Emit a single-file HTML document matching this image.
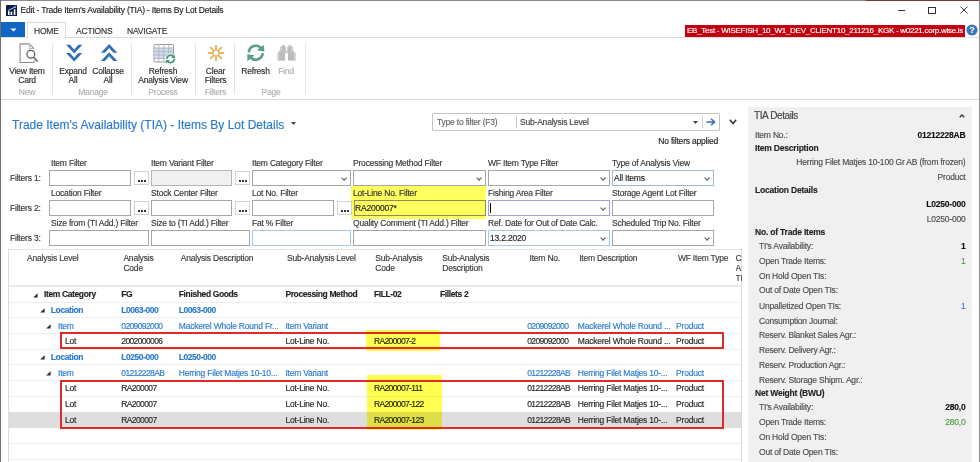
<!DOCTYPE html>
<html><head><meta charset="utf-8">
<style>
*{margin:0;padding:0;box-sizing:border-box}
html,body{width:980px;height:462px;overflow:hidden;background:#fff}
body{position:relative;font-family:"Liberation Sans",sans-serif;font-size:8.5px;color:#333}
.a{position:absolute;white-space:nowrap}
div{-webkit-text-stroke:0.15px currentColor}
.gb,.gbb,.pb,.prb{-webkit-text-stroke:0.12px currentColor}
.ln{position:absolute;background:#d9d9d9}
.rb{position:absolute;text-align:center;font-size:8.5px;letter-spacing:-0.2px;line-height:9px;color:#2a2a2a;white-space:nowrap}
.grp{position:absolute;text-align:center;font-size:8.5px;letter-spacing:-0.2px;line-height:9px;color:#b0b0b0;white-space:nowrap}
.sep{position:absolute;top:43px;width:1px;height:51px;background:#e3e3e3}
.lbl{position:absolute;font-size:8.5px;letter-spacing:-0.2px;line-height:10px;color:#363636;white-space:nowrap}
.inp{position:absolute;height:16px;border:1px solid #a6a6a6;background:#fff}
.dots{position:absolute;width:15px;height:14px;border:1px solid #d2d2d2;background:#fff}
.dots::after{content:"";position:absolute;left:3px;top:8px;width:2px;height:2px;background:#333;box-shadow:3px 0 0 #333,6px 0 0 #333}
.chev{position:absolute;right:3.5px;top:4.5px;width:4.2px;height:4.2px;border-right:1px solid #555;border-bottom:1px solid #555;transform:rotate(45deg)}
.gh{position:absolute;top:253.3px;font-size:8.5px;letter-spacing:-0.2px;line-height:10px;color:#3a3a3a;white-space:nowrap}
.gc{position:absolute;font-size:8.5px;letter-spacing:-0.2px;line-height:15.7px;white-space:nowrap}
.gb{font-weight:bold;color:#222}
.gbb{font-weight:bold;color:#2a7bcf}
.gbl{color:#2a7bcf}
.gn{color:#262626}
.yl{background:#ffff52;mix-blend-mode:multiply}
.pl{font-size:8.5px;letter-spacing:-0.2px;line-height:10px;color:#4d4d4d}
.pb{font-size:8.5px;letter-spacing:-0.2px;line-height:10px;color:#222;font-weight:bold}
.pr{font-size:8.5px;letter-spacing:-0.2px;line-height:10px;color:#4d4d4d}
.prb{font-size:8.5px;letter-spacing:-0.2px;line-height:10px;color:#111;font-weight:bold}
.prg{font-size:8.5px;letter-spacing:-0.2px;line-height:10px;color:#4a9e3a}
.prbl{font-size:8.5px;letter-spacing:-0.2px;line-height:10px;color:#2a7bcf}
</style></head><body>
<!-- window borders -->
<div class="a" style="left:0;top:0;width:866px;height:1px;background:#8a8a8a"></div>
<div class="a" style="left:866px;top:0;width:113px;height:1px;background:#7b3636"></div>
<div class="a" style="left:0;top:0;width:1px;height:462px;background:#707070"></div>
<div class="a" style="left:979px;top:0;width:1px;height:462px;background:#8a8a8a"></div>

<!-- title bar -->
<svg class="a" style="left:6px;top:5px" width="11" height="11" viewBox="0 0 11 11"><rect width="11" height="11" rx="0.5" fill="#0b1f4f"/><path d="M2 6.2H3.6V10H2ZM4.6 6.8H6.3V10H4.6ZM7.8 4.2H9.4V10H7.8Z" fill="#fff"/><path d="M2 5.6L6 3.6L8.9 2" stroke="#dfe6f2" stroke-width="0.9" fill="none"/><circle cx="9.1" cy="2" r="0.8" fill="#fff"/></svg>
<div class="a" style="left:20.6px;top:4px;font-size:8.5px;letter-spacing:-0.2px;color:#222;line-height:12px">Edit - Trade Item's Availability (TIA) - Items By Lot Details</div>
<!-- window controls -->
<div class="a" style="left:898px;top:10px;width:7px;height:1px;background:#333"></div>
<div class="a" style="left:928px;top:7px;width:8px;height:7px;border:1px solid #333"></div>
<svg class="a" style="left:960px;top:6px" width="8" height="8" viewBox="0 0 8 8"><path d="M0.5 0.5L7.5 7.5M7.5 0.5L0.5 7.5" stroke="#333" stroke-width="1"/></svg>

<!-- tabs -->
<div class="a" style="left:1px;top:22px;width:23.5px;height:15.8px;background:#1066c4"></div>
<svg class="a" style="left:10px;top:28px" width="7" height="4" viewBox="0 0 7 4"><path d="M0.5 0.5H6.5L3.5 3.5Z" fill="#fff"/></svg>
<div class="a" style="left:27px;top:22px;width:38.5px;height:16px;border:1px solid #dadada;border-bottom:none;background:#fff;z-index:2"></div>
<div class="a" style="left:34px;top:26px;font-size:8.5px;letter-spacing:-0.2px;line-height:10px;color:#333;z-index:3">HOME</div>
<div class="a" style="left:76px;top:26px;font-size:8.5px;letter-spacing:-0.2px;line-height:10px;color:#333">ACTIONS</div>
<div class="a" style="left:127px;top:26px;font-size:8.5px;letter-spacing:-0.2px;line-height:10px;color:#333">NAVIGATE</div>
<div class="a" style="left:684.5px;top:25px;width:280px;height:12px;background:#c4000f;color:#fff;font-size:8px;letter-spacing:-0.27px;line-height:12px;padding-left:2.5px;overflow:hidden">EB_Test - WISEFISH_10_W1_DEV_CLIENT10_211216_KGK - w0221.corp.wise.is</div>
<svg class="a" style="left:966px;top:24px" width="12" height="12" viewBox="0 0 12 12"><circle cx="6" cy="6" r="5.6" fill="#3c78b8"/><text x="6" y="9.2" font-family="Liberation Sans" font-weight="bold" font-size="9" fill="#fff" text-anchor="middle">?</text></svg>
<div class="ln" style="left:1px;top:37px;width:978px;height:1px;background:#dcdcdc;z-index:1"></div>

<!-- ribbon -->
<svg class="a" style="left:19px;top:43px" width="20" height="20" viewBox="0 0 20 20">
<path d="M14.9 17.3V19.5H1.1V0.9H10.1L14.9 5.7" fill="none" stroke="#8c8c8c" stroke-width="1.1"/>
<path d="M10.3 1.2V5.5H14.6" fill="none" stroke="#b8b8b8" stroke-width="1"/>
<circle cx="11.8" cy="11.3" r="3.9" fill="none" stroke="#5a5a5a" stroke-width="1.2"/>
<path d="M14.6 14.3L18.6 18.4" stroke="#5a5a5a" stroke-width="1.5"/>
</svg>
<div class="rb" style="left:6px;top:67px;width:42px">View Item<br>Card</div>
<div class="grp" style="left:6px;top:88px;width:42px">New</div>
<div class="sep" style="left:52px"></div>
<svg class="a" style="left:65px;top:44px" width="18" height="18" viewBox="0 0 18 18">
<path d="M1 0.8H5L9.2 5.6L13.4 0.8H17.4L9.2 9.4Z M1 9H5L9.2 13.8L13.4 9H17.4L9.2 17.6Z" fill="#3271b8"/>
</svg>
<svg class="a" style="left:100px;top:44px" width="18" height="18" viewBox="0 0 18 18">
<path d="M0.9 8.7L9.2 0.1L17.4 8.7H13.4L9.2 4.1L4.9 8.7Z M0.9 16.9L9.2 8.3L17.4 16.9H13.4L9.2 12.3L4.9 16.9Z" fill="#3271b8"/>
</svg>
<div class="rb" style="left:55px;top:67px;width:36px">Expand<br>All</div>
<div class="rb" style="left:90px;top:67px;width:36px">Collapse<br>All</div>
<div class="grp" style="left:60px;top:88px;width:66px">Manage</div>
<div class="sep" style="left:131px"></div>
<svg class="a" style="left:153px;top:44px" width="23" height="20" viewBox="0 0 23 20">
<rect x="1" y="0.5" width="19.5" height="17.5" rx="0.8" fill="#fff" stroke="#9a9a9a" stroke-width="1"/>
<rect x="1.5" y="4" width="18.5" height="10.5" fill="#c9dcf3"/>
<path d="M5.9 0.5V18M10.8 0.5V18M15.7 0.5V18M1 4H20.5M1 7.5H20.5M1 11H20.5M1 14.5H20.5" stroke="#b4b4b4" stroke-width="0.9"/>
<circle cx="17.3" cy="15" r="5.4" fill="#fff"/>
<g transform="translate(12.2,10.2) scale(0.54)"><path d="M2.9 8.4A6.9 6.9 0 0 1 15.45 4.74" fill="none" stroke="#3f9a70" stroke-width="3.2"/><path d="M17.6 0.8L18.5 7.5L10.9 6.4Z" fill="#3f9a70"/><path d="M16.7 9.2A6.9 6.9 0 0 1 4.15 12.66" fill="none" stroke="#3f9a70" stroke-width="3.2"/><path d="M1.3 10.3V17.3L8.6 11.2Z" fill="#3f9a70"/></g>
</svg>
<div class="rb" style="left:133px;top:67px;width:60px">Refresh<br>Analysis View</div>
<div class="grp" style="left:133px;top:88px;width:60px">Process</div>
<div class="sep" style="left:195px"></div>
<svg class="a" style="left:206.7px;top:44px" width="18" height="18" viewBox="0 0 18 18">
<g stroke="#e8b660" stroke-width="1.9" stroke-linecap="round">
<path d="M9 1.6V16.4M1.6 9H16.4M3.6 3.6L14.4 14.4M14.4 3.6L3.6 14.4"/>
</g>
<circle cx="9" cy="9" r="3.6" fill="#e8b660"/>
<circle cx="9" cy="9" r="2.3" fill="#fff"/>
</svg>
<div class="rb" style="left:197px;top:67px;width:37px">Clear<br>Filters</div>
<div class="grp" style="left:197px;top:88px;width:37px">Filters</div>
<div class="sep" style="left:234px"></div>
<svg class="a" style="left:246px;top:44px" width="19" height="18" viewBox="0 0 19 18"><path d="M2.9 8.4A6.9 6.9 0 0 1 15.45 4.74" fill="none" stroke="#5b9e86" stroke-width="2.6"/><path d="M17.6 0.8L18.5 7.5L10.9 6.4Z" fill="#5b9e86"/><path d="M16.7 9.2A6.9 6.9 0 0 1 4.15 12.66" fill="none" stroke="#5b9e86" stroke-width="2.6"/><path d="M1.3 10.3V17.3L8.6 11.2Z" fill="#5b9e86"/></svg>
<svg class="a" style="left:277px;top:45px" width="19" height="16" viewBox="0 0 19 16">
<g fill="#bcbcbc">
<rect x="0.5" y="7.7" width="7.6" height="7.9"/><rect x="3.1" y="1.8" width="5.7" height="6"/><rect x="4.8" y="0.2" width="2.8" height="1.8"/><rect x="2.1" y="5.5" width="1.2" height="2.4"/>
<rect x="8.6" y="6.5" width="1.8" height="1.6"/>
<rect x="11" y="7.7" width="7.6" height="7.9"/><rect x="10.2" y="1.8" width="5.7" height="6"/><rect x="11.5" y="0.2" width="2.8" height="1.8"/><rect x="15.7" y="5.5" width="1.2" height="2.4"/>
</g>
<g fill="#dadada"><rect x="0.5" y="8.5" width="1.3" height="6.5"/><rect x="17.2" y="8.5" width="1.3" height="6.5"/><rect x="14.2" y="2.5" width="1.2" height="3.5"/><rect x="3.6" y="2.5" width="1.2" height="3.5"/></g>
</svg>
<div class="rb" style="left:237px;top:67px;width:37px">Refresh</div>
<div class="rb" style="left:270px;top:67px;width:32px;color:#b0b0b0">Find</div>
<div class="grp" style="left:237px;top:88px;width:68px">Page</div>
<div class="sep" style="left:305px"></div>
<div class="ln" style="left:1px;top:99px;width:978px;height:1px;background:#dcdcdc"></div>


<!-- page title -->
<div class="a" style="left:12px;top:117.5px;font-size:12px;line-height:15px;color:#2a7bcf">Trade Item's Availability (TIA) - Items By Lot Details</div>
<svg class="a" style="left:291px;top:122px" width="5" height="3" viewBox="0 0 5 3"><path d="M0 0H5L2.5 3Z" fill="#444"/></svg>

<!-- search box -->
<div class="a" style="left:432px;top:113px;width:288px;height:17.5px;border:1px solid #c4c4c4;border-radius:1px;background:#fff"></div>
<div class="a" style="left:437px;top:117px;font-size:8.5px;letter-spacing:-0.2px;line-height:10px;color:#666">Type to filter (F3)</div>
<div class="a" style="left:516px;top:115.5px;width:1px;height:12.5px;background:#c8c8c8"></div>
<div class="a" style="left:520px;top:117px;font-size:8.5px;letter-spacing:-0.2px;line-height:10px;color:#444">Sub-Analysis Level</div>
<svg class="a" style="left:693px;top:121px" width="5" height="3" viewBox="0 0 5 3"><path d="M0 0H5L2.5 3Z" fill="#444"/></svg>
<div class="a" style="left:701.5px;top:115.5px;width:1px;height:12.5px;background:#d4d4d4"></div>
<svg class="a" style="left:706px;top:118px" width="10" height="8" viewBox="0 0 10 8"><path d="M0.5 4H8.5M5 0.8L8.6 4L5 7.2" fill="none" stroke="#2f6fb5" stroke-width="1.5"/></svg>
<svg class="a" style="left:729px;top:119px" width="8" height="6" viewBox="0 0 8 6"><path d="M0.8 0.8L4 4.5L7.2 0.8" fill="none" stroke="#333" stroke-width="1.5"/></svg>
<div class="a" style="left:656px;top:136px;font-size:8.5px;letter-spacing:-0.2px;line-height:10px;color:#222;width:62px;text-align:right">No filters applied</div>

<!-- filters -->
<div class="a" style="left:351px;top:186px;width:135px;height:33.2px;background:#ffff60"></div>
<div class="lbl" style="left:10px;top:173px">Filters 1:</div>
<div class="lbl" style="left:10px;top:203px">Filters 2:</div>
<div class="lbl" style="left:10px;top:233px">Filters 3:</div>

<div class="lbl" style="left:51px;top:158px">Item Filter</div>
<div class="inp" style="left:49px;top:170px;width:82px"></div>
<div class="dots" style="left:134px;top:171px"></div>
<div class="lbl" style="left:151px;top:158px">Item Variant Filter</div>
<div class="inp" style="left:151px;top:170px;width:81px;background:#f0f0f0;border-color:#b5b5b5"></div>
<div class="dots" style="left:235px;top:171px"></div>
<div class="lbl" style="left:252px;top:158px">Item Category Filter</div>
<div class="inp" style="left:252px;top:170px;width:99px"><div class="chev"></div></div>
<div class="lbl" style="left:353px;top:158px">Processing Method Filter</div>
<div class="inp" style="left:353px;top:170px;width:133px"><div class="chev"></div></div>
<div class="lbl" style="left:488px;top:158px">WF Item Type Filter</div>
<div class="inp" style="left:488px;top:170px;width:122px"><div class="chev"></div></div>
<div class="lbl" style="left:612px;top:158px">Type of Analysis View</div>
<div class="inp" style="left:612px;top:170px;width:102px;border-color:#9fb8d8"><div class="chev"></div></div>
<div class="a" style="left:614px;top:173px;font-size:8.5px;letter-spacing:-0.2px;line-height:10px;color:#222">All Items</div>

<div class="lbl" style="left:51px;top:188px">Location Filter</div>
<div class="inp" style="left:49px;top:200px;width:82px"></div>
<div class="dots" style="left:134px;top:201px"></div>
<div class="lbl" style="left:151px;top:188px">Stock Center Filter</div>
<div class="inp" style="left:151px;top:200px;width:81px"></div>
<div class="dots" style="left:235px;top:201px"></div>
<div class="lbl" style="left:252px;top:188px">Lot No. Filter</div>
<div class="inp" style="left:252px;top:200px;width:82px"></div>
<div class="dots" style="left:337px;top:201px"></div>
<div class="lbl" style="left:353px;top:188px;color:#333">Lot-Line No. Filter</div>
<div class="inp" style="left:353.5px;top:200px;width:132.5px;background:#ffff60;border-color:#8c8c55"></div>
<div class="a" style="left:355px;top:203px;font-size:8.5px;letter-spacing:-0.2px;line-height:10px;color:#222">RA200007*</div>
<div class="lbl" style="left:488px;top:188px">Fishing Area Filter</div>
<div class="inp" style="left:488px;top:200px;width:122px;border-color:#a49cd6"><div class="chev"></div></div>
<div class="a" style="left:490px;top:203px;width:1px;height:10px;background:#000"></div>
<div class="lbl" style="left:612px;top:188px">Storage Agent Lot Filter</div>
<div class="inp" style="left:612px;top:200px;width:102px"></div>

<div class="lbl" style="left:51px;top:218px">Size from (TI Add.) Filter</div>
<div class="inp" style="left:49px;top:230px;width:100px"></div>
<div class="lbl" style="left:151px;top:218px">Size to (TI Add.) Filter</div>
<div class="inp" style="left:151px;top:230px;width:99px"></div>
<div class="lbl" style="left:252px;top:218px">Fat % Filter</div>
<div class="inp" style="left:252px;top:230px;width:99px;border-color:#a8c8e8"></div>
<div class="lbl" style="left:353px;top:218px">Quality Comment (TI Add.) Filter</div>
<div class="inp" style="left:353px;top:230px;width:133px"></div>
<div class="lbl" style="left:488px;top:218px">Ref. Date for Out of Date Calc.</div>
<div class="inp" style="left:488px;top:230px;width:122px;border-color:#a8c8e8"><div class="chev"></div></div>
<div class="a" style="left:490px;top:233px;font-size:8.5px;letter-spacing:-0.2px;line-height:10px;color:#222">13.2.2020</div>
<div class="lbl" style="left:612px;top:218px">Scheduled Trip No. Filter</div>
<div class="inp" style="left:612px;top:230px;width:102px"><div class="chev"></div></div>

<!-- GRID -->
<div class="a" style="left:8px;top:249px;width:734px;height:1px;background:#e3e3e3"></div>
<div class="a" style="left:7.5px;top:249px;width:1px;height:213px;background:#dcdcdc"></div>
<div class="a" style="left:741px;top:249px;width:1px;height:213px;background:#dcdcdc"></div>
<div class="a" style="left:9px;top:285px;width:732px;height:2px;background:#e9e9e9"></div>
<div class="gh" style="left:27px">Analysis Level</div>
<div class="gh" style="left:123.4px">Analysis<br>Code</div>
<div class="gh" style="left:180.8px">Analysis Description</div>
<div class="gh" style="left:287px">Sub-Analysis Level</div>
<div class="gh" style="left:375.2px">Sub-Analysis<br>Code</div>
<div class="gh" style="left:442.2px">Sub-Analysis<br>Description</div>
<div class="gh" style="left:529.5px">Item No.</div>
<div class="gh" style="left:579.2px">Item Description</div>
<div class="gh" style="left:677.9px">WF Item Type</div>
<div class="gh" style="left:735.5px;width:6px;overflow:hidden">C<br>A<br>TI</div>
<div class="a" style="left:9px;top:301.6px;width:732px;height:1px;background:#efefef"></div>
<div class="a" style="left:9px;top:317.3px;width:732px;height:1px;background:#efefef"></div>
<div class="a" style="left:9px;top:333.0px;width:732px;height:1px;background:#efefef"></div>
<div class="a" style="left:9px;top:348.7px;width:732px;height:1px;background:#efefef"></div>
<div class="a" style="left:9px;top:364.4px;width:732px;height:1px;background:#efefef"></div>
<div class="a" style="left:9px;top:380.1px;width:732px;height:1px;background:#efefef"></div>
<div class="a" style="left:9px;top:395.8px;width:732px;height:1px;background:#efefef"></div>
<div class="a" style="left:9px;top:411.5px;width:732px;height:1px;background:#efefef"></div>
<div class="a" style="left:9px;top:427.2px;width:732px;height:1px;background:#efefef"></div>
<div class="a" style="left:9px;top:442.9px;width:732px;height:1px;background:#efefef"></div>
<div class="a" style="left:9px;top:458.6px;width:732px;height:1px;background:#efefef"></div>
<div class="a" style="left:8.5px;top:411.7px;width:732.5px;height:16.0px;background:#dedede"></div>
<svg class="a" style="left:32.5px;top:292.6px" width="5" height="5" viewBox="0 0 5 5"><path d="M4.6 0.2V4.6H0.2Z" fill="#2a2a2a"/></svg>
<div class="gc gb" style="left:44px;top:287.2px;letter-spacing:-0.38px">Item Category</div>
<div class="gc gb" style="left:121.3px;top:287.2px;letter-spacing:-0.38px">FG</div>
<div class="gc gb" style="left:178.8px;top:287.2px;letter-spacing:-0.38px">Finished Goods</div>
<div class="gc gb" style="left:285.4px;top:287.2px;letter-spacing:-0.38px">Processing Method</div>
<div class="gc gb" style="left:373.9px;top:287.2px;letter-spacing:-0.38px">FILL-02</div>
<div class="gc gb" style="left:440px;top:287.2px;letter-spacing:-0.38px">Fillets 2</div>
<svg class="a" style="left:39.5px;top:308.3px" width="5" height="5" viewBox="0 0 5 5"><path d="M4.6 0.2V4.6H0.2Z" fill="#2a2a2a"/></svg>
<div class="gc gbb" style="left:50.8px;top:302.9px;letter-spacing:-0.38px">Location</div>
<div class="gc gbb" style="left:121.3px;top:302.9px;letter-spacing:-0.45px">L0063-000</div>
<div class="gc gbb" style="left:178.8px;top:302.9px;letter-spacing:-0.45px">L0063-000</div>
<svg class="a" style="left:46.3px;top:324.0px" width="5" height="5" viewBox="0 0 5 5"><path d="M4.6 0.2V4.6H0.2Z" fill="#2a2a2a"/></svg>
<div class="gc gbl" style="left:58px;top:318.6px;letter-spacing:-0.22px">Item</div>
<div class="gc gbl" style="left:121.3px;top:318.6px;letter-spacing:-0.62px">0209092000</div>
<div class="gc gbl" style="left:178.8px;top:318.6px;letter-spacing:-0.22px">Mackerel Whole Round Fr...</div>
<div class="gc gbl" style="left:285.4px;top:318.6px;letter-spacing:-0.22px">Item Variant</div>
<div class="gc gbl" style="left:527.2px;top:318.6px;letter-spacing:-0.62px">0209092000</div>
<div class="gc gbl" style="left:577.8px;top:318.6px;letter-spacing:-0.22px">Mackerel Whole Round ...</div>
<div class="gc gbl" style="left:676.1px;top:318.6px;letter-spacing:-0.22px">Product</div>
<div class="gc gn" style="left:65px;top:334.3px;letter-spacing:-0.22px">Lot</div>
<div class="gc gn" style="left:121.3px;top:334.3px;letter-spacing:-0.62px">2002000006</div>
<div class="gc gn" style="left:285.4px;top:334.3px;letter-spacing:-0.22px">Lot-Line No.</div>
<div class="gc gn" style="left:373.9px;top:334.3px;letter-spacing:-0.62px">RA200007-2</div>
<div class="gc gn" style="left:527.2px;top:334.3px;letter-spacing:-0.62px">0209092000</div>
<div class="gc gn" style="left:577.8px;top:334.3px;letter-spacing:-0.22px">Mackerel Whole Round ...</div>
<div class="gc gn" style="left:676.1px;top:334.3px;letter-spacing:-0.22px">Product</div>
<svg class="a" style="left:39.5px;top:355.4px" width="5" height="5" viewBox="0 0 5 5"><path d="M4.6 0.2V4.6H0.2Z" fill="#2a2a2a"/></svg>
<div class="gc gbb" style="left:50.8px;top:350.0px;letter-spacing:-0.38px">Location</div>
<div class="gc gbb" style="left:121.3px;top:350.0px;letter-spacing:-0.45px">L0250-000</div>
<div class="gc gbb" style="left:178.8px;top:350.0px;letter-spacing:-0.45px">L0250-000</div>
<svg class="a" style="left:46.3px;top:371.1px" width="5" height="5" viewBox="0 0 5 5"><path d="M4.6 0.2V4.6H0.2Z" fill="#2a2a2a"/></svg>
<div class="gc gbl" style="left:58px;top:365.7px;letter-spacing:-0.22px">Item</div>
<div class="gc gbl" style="left:121.3px;top:365.7px;letter-spacing:-0.62px">01212228AB</div>
<div class="gc gbl" style="left:178.8px;top:365.7px;letter-spacing:-0.22px">Herring Filet Matjes 10-10...</div>
<div class="gc gbl" style="left:285.4px;top:365.7px;letter-spacing:-0.22px">Item Variant</div>
<div class="gc gbl" style="left:527.2px;top:365.7px;letter-spacing:-0.62px">01212228AB</div>
<div class="gc gbl" style="left:577.8px;top:365.7px;letter-spacing:-0.22px">Herring Filet Matjes 10-...</div>
<div class="gc gbl" style="left:676.1px;top:365.7px;letter-spacing:-0.22px">Product</div>
<div class="gc gn" style="left:65px;top:381.4px;letter-spacing:-0.22px">Lot</div>
<div class="gc gn" style="left:121.3px;top:381.4px;letter-spacing:-0.62px">RA200007</div>
<div class="gc gn" style="left:285.4px;top:381.4px;letter-spacing:-0.22px">Lot-Line No.</div>
<div class="gc gn" style="left:373.9px;top:381.4px;letter-spacing:-0.62px">RA200007-111</div>
<div class="gc gn" style="left:527.2px;top:381.4px;letter-spacing:-0.62px">01212228AB</div>
<div class="gc gn" style="left:577.8px;top:381.4px;letter-spacing:-0.22px">Herring Filet Matjes 10-...</div>
<div class="gc gn" style="left:676.1px;top:381.4px;letter-spacing:-0.22px">Product</div>
<div class="gc gn" style="left:65px;top:397.1px;letter-spacing:-0.22px">Lot</div>
<div class="gc gn" style="left:121.3px;top:397.1px;letter-spacing:-0.62px">RA200007</div>
<div class="gc gn" style="left:285.4px;top:397.1px;letter-spacing:-0.22px">Lot-Line No.</div>
<div class="gc gn" style="left:373.9px;top:397.1px;letter-spacing:-0.62px">RA200007-122</div>
<div class="gc gn" style="left:527.2px;top:397.1px;letter-spacing:-0.62px">01212228AB</div>
<div class="gc gn" style="left:577.8px;top:397.1px;letter-spacing:-0.22px">Herring Filet Matjes 10-...</div>
<div class="gc gn" style="left:676.1px;top:397.1px;letter-spacing:-0.22px">Product</div>
<div class="gc gn" style="left:65px;top:412.8px;letter-spacing:-0.22px">Lot</div>
<div class="gc gn" style="left:121.3px;top:412.8px;letter-spacing:-0.62px">RA200007</div>
<div class="gc gn" style="left:285.4px;top:412.8px;letter-spacing:-0.22px">Lot-Line No.</div>
<div class="gc gn" style="left:373.9px;top:412.8px;letter-spacing:-0.62px">RA200007-123</div>
<div class="gc gn" style="left:527.2px;top:412.8px;letter-spacing:-0.62px">01212228AB</div>
<div class="gc gn" style="left:577.8px;top:412.8px;letter-spacing:-0.22px">Herring Filet Matjes 10-...</div>
<div class="gc gn" style="left:676.1px;top:412.8px;letter-spacing:-0.22px">Product</div>
<div class="a yl" style="left:366.1px;top:330.4px;width:74.2px;height:20.2px"></div>
<div class="a yl" style="left:367.3px;top:375px;width:74.5px;height:55.2px"></div>
<div class="a" style="left:60px;top:332px;width:664px;height:17px;border:2px solid #e02a2a"></div>
<div class="a" style="left:60px;top:380px;width:664px;height:49px;border:2px solid #e02a2a"></div>
<!-- PANEL -->
<div class="a" style="left:748px;top:106.8px;width:224.4px;height:356px;background:#f0f0f0"></div>
<div class="a" style="left:754px;top:110px;font-size:10px;letter-spacing:-0.4px;line-height:12px;color:#444">TIA Details</div>
<svg class="a" style="left:959px;top:114px" width="6" height="4" viewBox="0 0 6 4"><path d="M0.7 3.3L3 1L5.3 3.3" fill="none" stroke="#333" stroke-width="1.3"/></svg>
<div class="a pl" style="left:755px;top:130px">Item No.:</div>
<div class="a prb" style="right:14.5px;top:130px">01212228AB</div>
<div class="a pb" style="left:755px;top:143px">Item Description</div>
<div class="a pr" style="right:14.5px;top:157px">Herring Filet Matjes 10-100 Gr AB (from frozen)</div>
<div class="a pr" style="right:14.5px;top:171.5px">Product</div>
<div class="a pb" style="left:755px;top:185px">Location Details</div>
<div class="a prb" style="right:14.5px;top:198.5px">L0250-000</div>
<div class="a pr" style="right:14.5px;top:213.5px">L0250-000</div>
<div class="a pb" style="left:755px;top:226.6px">No. of Trade Items</div>
<div class="a pl" style="left:759px;top:240.6px">TI's Availability:</div>
<div class="a prb" style="right:14.5px;top:240.6px">1</div>
<div class="a pl" style="left:759px;top:255.5px">Open Trade Items:</div>
<div class="a prg" style="right:14.5px;top:255.5px">1</div>
<div class="a pl" style="left:759px;top:270.7px">On Hold Open TIs:</div>
<div class="a pl" style="left:759px;top:285.4px">Out of Date Open TIs:</div>
<div class="a pl" style="left:759px;top:300.6px">Unpalletized Open TIs:</div>
<div class="a prbl" style="right:14.5px;top:300.6px">1</div>
<div class="a pl" style="left:759px;top:315.5px">Consumption Journal:</div>
<div class="a pl" style="left:759px;top:330.4px">Reserv. Blanket Sales Agr.:</div>
<div class="a pl" style="left:759px;top:345.3px">Reserv. Delivery Agr.:</div>
<div class="a pl" style="left:759px;top:360.1px">Reserv. Production Agr.:</div>
<div class="a pl" style="left:759px;top:375px">Reserv. Storage Shipm. Agr.:</div>
<div class="a pb" style="left:755px;top:388px">Net Weight (BWU)</div>
<div class="a pl" style="left:759px;top:402.2px">TI's Availability:</div>
<div class="a prb" style="right:14.5px;top:402.2px">280,0</div>
<div class="a pl" style="left:759px;top:417px">Open Trade Items:</div>
<div class="a prg" style="right:14.5px;top:417px">280,0</div>
<div class="a pl" style="left:759px;top:432px">On Hold Open TIs:</div>
<div class="a pl" style="left:759px;top:446.8px">Out of Date Open TIs:</div>
</body></html>
